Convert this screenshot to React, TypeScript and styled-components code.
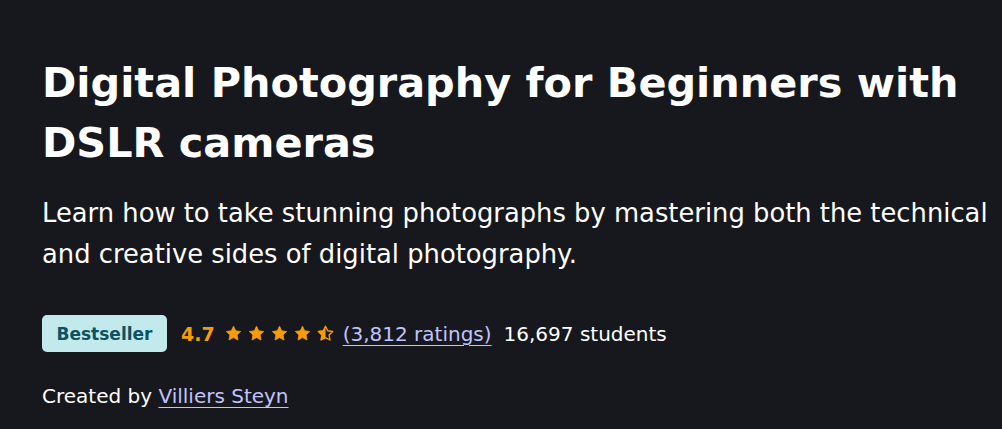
import React from "react";
import styled, { createGlobalStyle } from "styled-components";

const Global = createGlobalStyle`
  html, body { margin: 0; padding: 0; background: #17181d; }
  body { font-family: "DejaVu Sans", "Noto Sans", sans-serif; color: #ffffff; }
`;

const Page = styled.main`
  width: 1002px;
  height: 429px;
  box-sizing: border-box;
  padding: 53px 0 0 42px;
  background: #17181d;
  display: flex;
  flex-direction: column;
  overflow: hidden;
`;

const Title = styled.h1`
  margin: 0;
  font-size: 41.4px;
  line-height: 60px;
  font-weight: 700;
  max-width: 940px;
`;

const Lead = styled.p`
  margin: 20px 0 0;
  font-size: 25.8px;
  line-height: 41px;
  font-weight: 400;
  max-width: 955px;
`;

const Meta = styled.div`
  margin-top: 40px;
  display: flex;
  align-items: center;
  font-size: 20px;
  height: 37px;
`;

const Badge = styled.span`
  display: inline-flex;
  align-items: center;
  justify-content: center;
  height: 37px;
  width: 125px;
  box-sizing: border-box;
  border-radius: 5px;
  background: #c2e9eb;
  color: #0d5261;
  font-weight: 700;
  font-size: 17px;
  margin-right: 14px;
`;

const Score = styled.span`
  color: #f69c08;
  font-weight: 700;
  font-size: 19px;
  margin-right: 10px;
`;

const Stars = styled.span`
  display: inline-flex;
  gap: 6px;
  margin-right: 9px;
`;

const Link = styled.a`
  color: #c0c4fc;
  text-decoration: underline;
  text-underline-offset: 4px;
  text-decoration-thickness: 1px;
`;

const Students = styled.span`
  margin-left: 12px;
  color: #ffffff;
`;

const Creator = styled.div`
  margin-top: 30px;
  font-size: 20px;
  line-height: 28px;
`;

const StarPath =
  "M8.5 1.2l2.2 4.6 5 .7-3.6 3.5.9 5L8.5 12.6 4 15l.9-5L1.3 6.5l5-.7z";

const Star: React.FC<{ half?: boolean }> = ({ half }) => (
  <svg width="17" height="17" viewBox="0 0 17 17">
    {half ? (
      <>
        <defs>
          <clipPath id="lh">
            <rect x="0" y="0" width="8.5" height="17" />
          </clipPath>
        </defs>
        <path d={StarPath} fill="none" stroke="#f69c08" strokeWidth="1.4" strokeLinejoin="round" />
        <path d={StarPath} fill="#f69c08" clipPath="url(#lh)" />
      </>
    ) : (
      <path d={StarPath} fill="#f69c08" stroke="#f69c08" strokeWidth="0.8" strokeLinejoin="round" />
    )}
  </svg>
);

export default function App() {
  return (
    <>
      <Global />
      <Page>
        <Title>Digital Photography for Beginners with DSLR cameras</Title>
        <Lead>
          Learn how to take stunning photographs by mastering both the technical and creative sides of digital
          photography.
        </Lead>
        <Meta>
          <Badge>Bestseller</Badge>
          <Score>4.7</Score>
          <Stars>
            <Star />
            <Star />
            <Star />
            <Star />
            <Star half />
          </Stars>
          <Link href="#">(3,812 ratings)</Link>
          <Students>16,697 students</Students>
        </Meta>
        <Creator>
          Created by <Link href="#">Villiers Steyn</Link>
        </Creator>
      </Page>
    </>
  );
}
